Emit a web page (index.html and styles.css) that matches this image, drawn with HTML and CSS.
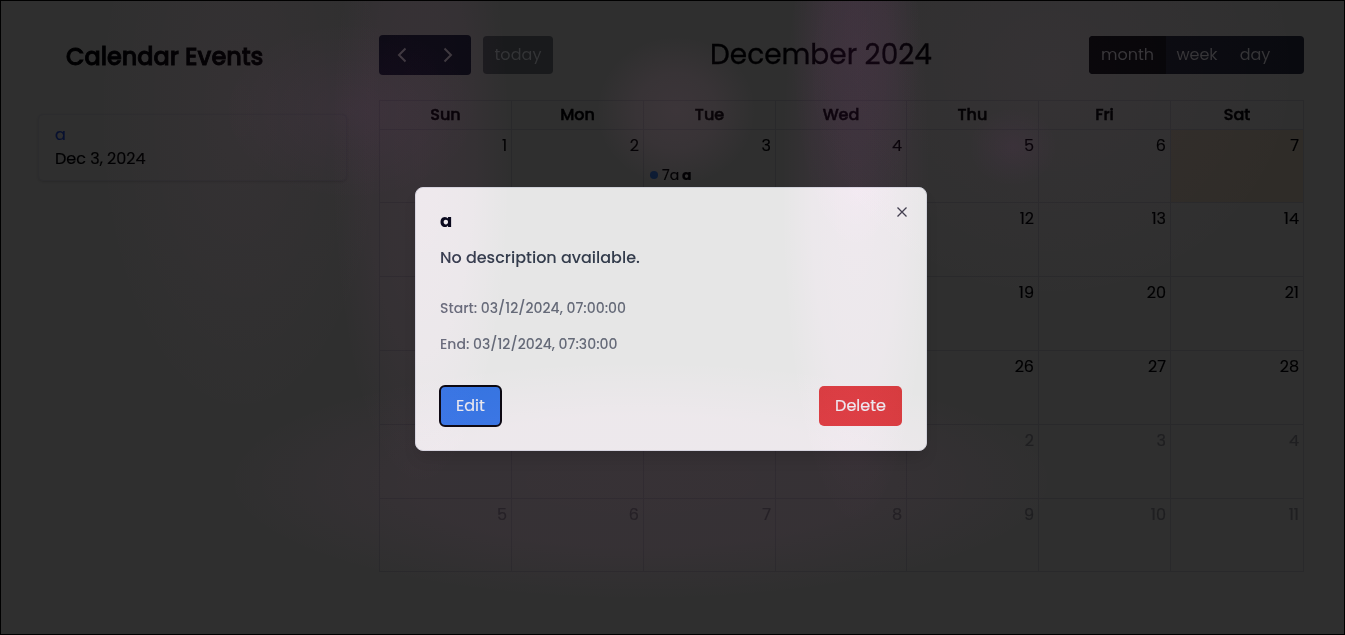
FILE: index.html
```
<!DOCTYPE html>
<html lang="en">
<head>
<meta charset="utf-8">
<title>Calendar Events</title>
<link rel="stylesheet" href="styles.css">
</head>
<body>
<div class="page">
  <aside class="sidebar">
    <h1 class="heading">Calendar Events</h1>
    <div class="event-card">
      <div class="event-name">a</div>
      <div class="event-date">Dec 3, 2024</div>
    </div>
  </aside>
  <main class="calendar">
    <div class="toolbar">
      <div class="group">
        <div class="arrows">
          <svg class="chevron" viewBox="0 0 16 20"><path d="M11.500 3.500 5 10l6.500 6.500"/></svg>
          <svg class="chevron" viewBox="0 0 16 20"><path d="M4.500 3.500 11 10l-6.500 6.500"/></svg>
        </div>
        <div class="today-btn">today</div>
      </div>
      <h2 class="month-title">December 2024</h2>
      <div class="views"><span class="view view-on">month</span><span class="view">week</span><span class="view view-day">day</span></div>
    </div>
    <div class="grid">
      <div class="dow">Sun</div><div class="dow">Mon</div><div class="dow">Tue</div><div class="dow">Wed</div><div class="dow">Thu</div><div class="dow">Fri</div><div class="dow">Sat</div>
      <div class="day">1</div><div class="day">2</div><div class="day">3<div class="entry"><i class="dot"></i><span>7a</span><b>a</b></div></div><div class="day">4</div><div class="day">5</div><div class="day">6</div><div class="day today">7</div>
      <div class="day"></div><div class="day"></div><div class="day"></div><div class="day"></div><div class="day">12</div><div class="day">13</div><div class="day">14</div>
      <div class="day"></div><div class="day"></div><div class="day"></div><div class="day"></div><div class="day">19</div><div class="day">20</div><div class="day">21</div>
      <div class="day"></div><div class="day"></div><div class="day"></div><div class="day"></div><div class="day">26</div><div class="day">27</div><div class="day">28</div>
      <div class="day"></div><div class="day"></div><div class="day"></div><div class="day"></div><div class="day other">2</div><div class="day other">3</div><div class="day other">4</div>
      <div class="day other">5</div><div class="day other">6</div><div class="day other">7</div><div class="day other">8</div><div class="day other">9</div><div class="day other">10</div><div class="day other">11</div>
    </div>
  </main>
</div>
<div class="modal">
  <svg class="close" viewBox="0 0 16 16"><path d="M3.500 3.500l9 9M12.500 3.500l-9 9"/></svg>
  <h3 class="modal-title">a</h3>
  <p class="desc">No description available.</p>
  <p class="time time-start">Start: 03/12/2024, 07:00:00</p>
  <p class="time">End: 03/12/2024, 07:30:00</p>
  <div class="actions"><button class="btn edit">Edit</button><button class="btn delete">Delete</button></div>
</div>
<div class="glow"></div>
</body>
</html>
```
FILE: styles.css
```
* { box-sizing: border-box; margin: 0; }
body {
  width: 1345px; height: 635px; overflow: hidden;
  background: #2f2f2f; color: #000002;
  font-family: Poppins, Inter, "Open Sans", sans-serif;
  font-size: 16px; line-height: 24px;
}
.page { display: flex; height: 635px; border: 1px solid #000; padding: 34px 40px 0 37px; }
.sidebar { width: 309px; margin-right: 32px; flex: none; }
.heading { font-size: 24px; line-height: 32px; font-weight: 500; padding: 6px 0 0 28px; letter-spacing: -.05px; white-space: nowrap; -webkit-text-stroke: .8px #000002; }
.event-card { margin-top: 41px; height: 67px; padding: 8px 16px; border: 1px solid #2c2c2e; border-radius: 5px; box-shadow: 0 1px 2px rgba(0,0,0,.12); }
.event-name { color: #071030; }
.event-name, .event-date, .day { -webkit-text-stroke-width: .15px; }
.calendar { flex: none; width: 925px; }
.toolbar { display: flex; align-items: center; height: 40px; }
.group { display: flex; flex: none; align-items: center; gap: 12px; width: 174px; }
.arrows { display: flex; width: 92px; height: 40px; border-radius: 4px; background: #070910; align-items: center; justify-content: space-between; padding: 0 15px; }
.chevron { width: 16px; height: 20px; fill: none; stroke: #38373a; stroke-width: 2; }
.today-btn { width: 70px; height: 38px; line-height: 38px; border-radius: 4px; text-align: center; background: #191a1c; color: #333436; letter-spacing: .1px; }
.month-title { flex: none; width: 224px; margin: 0 155px 0 157px; font-size: 28px; line-height: 40px; font-weight: 400; white-space: nowrap; -webkit-text-stroke: .3px #000002; }
.views { display: flex; flex: none; width: 215px; height: 38px; line-height: 37px; background: #090a0f; border-radius: 4px; overflow: hidden; color: #343436; }
.view { width: 62px; text-align: center; }
.view-on { width: 77px; background: #050507; }
.view-day { width: 54px; }
.grid { display: grid; grid-template-columns: 132px 132px 132px 131px 132px 132px 133px; grid-template-rows: 29px 73px repeat(4, 74px) 73px; width: 925px; margin-top: 25px; border-top: 1px solid #29292b; border-left: 1px solid #29292b; }
.dow, .day { border-right: 1px solid #29292b; border-bottom: 1px solid #29292b; }
.dow { text-align: center; font-weight: 500; line-height: 27px; -webkit-text-stroke: .5px #000002; }
.day { text-align: right; padding: 4px 4px 0; }
.today { background: #2f2c28; }
.other { color: #1f1f21; }
.entry { display: flex; align-items: center; gap: 3px; font-size: 14px; line-height: 20px; margin-top: 7px; padding-left: 2px; }
.entry b { font-weight: 700; }
.dot { width: 8px; height: 8px; border-radius: 50%; background: #0c1b32; margin-right: 1px; }
.modal { position: absolute; left: 415px; top: 187px; width: 512px; height: 264px; padding: 24px; background: #e6e6e6; border: 1px solid #cfd1d8; border-radius: 8px; box-shadow: 0 10px 15px -3px rgba(0,0,0,.12); }
.close { position: absolute; right: 16px; top: 16px; width: 16px; height: 16px; fill: none; stroke: #3c3c49; stroke-width: 1.3; }
.modal-title { font-size: 18px; line-height: 18px; font-weight: 700; color: #020617; }
.desc { margin-top: 16px; line-height: 24px; font-weight: 500; color: #333c4c; }
.time { font-size: 14px; line-height: 20px; font-weight: 500; color: #656a78; margin-top: 16px; }
.time-start { margin-top: 28px; }
.actions { display: flex; justify-content: space-between; margin-top: 32px; }
.btn { height: 40px; border: 0; border-radius: 5px; color: #e6e6ea; font: inherit; padding: 0; -webkit-text-stroke-width: .15px; }
.edit { width: 61px; background: #3574df; outline: 2px solid #08070e; outline-offset: -1px; }
.delete { width: 83px; background: #d43b3d; }
.glow {
  position: absolute; inset: 1px; pointer-events: none; mix-blend-mode: plus-lighter;
  background:
    radial-gradient(65px 210px at 855px 40px, rgba(255,40,240,.035), rgba(255,40,240,.022) 50%, transparent),
    radial-gradient(75px 350px at 855px 180px, rgba(255,90,230,.035), rgba(255,90,230,.025) 60%, transparent),
    radial-gradient(80px 75px at 675px 110px, rgba(255,120,200,.05), rgba(255,120,200,.035) 50%, transparent),
    radial-gradient(130px 90px at 350px 110px, rgba(255,40,240,.03), transparent),
    radial-gradient(90px 340px at 420px 150px, rgba(255,80,210,.035), rgba(255,80,210,.022) 60%, transparent),
    radial-gradient(150px 320px at 240px 110px, rgba(255,100,200,.025), transparent),
    radial-gradient(45px 40px at 1012px 146px, rgba(255,30,240,.03), transparent),
    radial-gradient(260px 240px at 1050px 70px, rgba(255,130,220,.024), transparent),
    radial-gradient(420px 120px at 640px 480px, rgba(255,80,210,.033), rgba(255,80,210,.026) 55%, transparent);
}
```
